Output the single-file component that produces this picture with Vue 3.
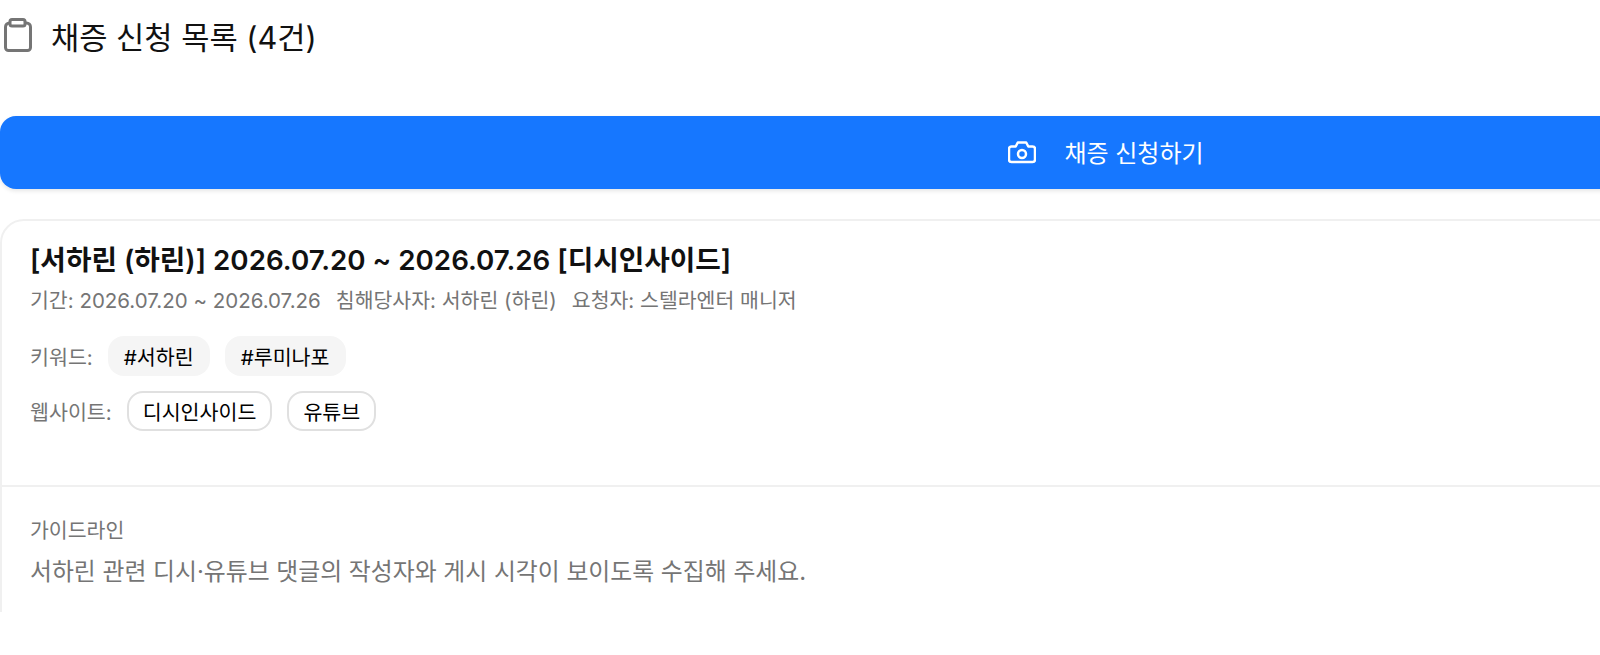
<template>
  <div class="viewport">
    <div class="page">
      <h2 class="list-title">
        <svg class="title-icon" viewBox="0 0 28 34" fill="none" stroke="#757575" stroke-width="3" stroke-linejoin="round">
          <path d="M6 5H5.500A4 4 0 0 0 1.500 9v20.500a3 3 0 0 0 3 3h19a3 3 0 0 0 3-3V9a4 4 0 0 0-4-4H22" />
          <rect x="6" y="1.500" width="15" height="6.500" rx="2" fill="#fff" />
        </svg>
        <span>채증 신청 목록 (4건)</span>
      </h2>

      <button type="button" class="apply-button">
        <svg class="camera-icon" viewBox="0 0 28 24" fill="none" stroke="#fff" stroke-width="2.500" stroke-linejoin="round" stroke-linecap="round">
          <path d="M3.500 6.500h4.200L9.800 2.500h8.400l2.100 4h4.200A2.500 2.500 0 0 1 27 9v10.500a2.500 2.500 0 0 1-2.500 2.500h-21A2.500 2.500 0 0 1 1 19.500V9a2.500 2.500 0 0 1 2.500-2.500z" />
          <circle cx="14" cy="14" r="4" />
        </svg>
        <span>채증 신청하기</span>
      </button>

      <article class="request-card">
        <div class="card-body">
          <h3>{{ request.title }}</h3>
          <p class="meta">
            <span v-for="item in request.meta" :key="item">{{ item }}</span>
          </p>
          <div class="tag-row keyword-row">
            <span class="row-label">키워드:</span>
            <span v-for="tag in request.keywords" :key="tag" class="tag tag-fill">{{ tag }}</span>
          </div>
          <div class="tag-row">
            <span class="row-label">웹사이트:</span>
            <span v-for="site in request.sites" :key="site" class="tag tag-line">{{ site }}</span>
          </div>
        </div>
        <div class="guide">
          <h4>가이드라인</h4>
          <p>{{ request.guide }}</p>
        </div>
      </article>
    </div>
  </div>
</template>

<script setup>
const request = {
  title: '[서하린 (하린)] 2026.07.20 ~ 2026.07.26 [디시인사이드]',
  meta: ['기간: 2026.07.20 ~ 2026.07.26', '침해당사자: 서하린 (하린)', '요청자: 스텔라엔터 매니저'],
  keywords: ['#서하린', '#루미나포'],
  sites: ['디시인사이드', '유튜브'],
  guide: '서하린 관련 디시·유튜브 댓글의 작성자와 게시 시각이 보이도록 수집해 주세요.'
}
</script>

<style scoped>
.viewport {
  width: 1600px;
  height: 655px;
  overflow: hidden;
  background: #ffffff;
}

.page {
  width: 2212px;
  height: 612px;
  overflow: hidden;
  font-family: Inter, "Noto Sans CJK KR", sans-serif;
  color: #111111;
}

.list-title {
  display: flex;
  align-items: center;
  gap: 19px;
  height: 70px;
  margin: 0;
  padding-left: 4px;
  font-size: 30.700px;
  font-weight: 400;
  color: #111111;
}

.title-icon {
  width: 28px;
  height: 34px;
}

.apply-button {
  display: flex;
  align-items: center;
  justify-content: center;
  gap: 28px;
  width: 100%;
  height: 73px;
  margin-top: 46px;
  padding: 0 0 2px;
  border: 0;
  border-radius: 16px;
  background: #1677ff;
  box-shadow: 0 2px 4px rgba(0, 0, 0, 0.1);
  color: #ffffff;
  font-family: inherit;
  font-size: 24px;
}

.camera-icon {
  width: 28px;
  height: 24px;
}

.request-card {
  margin-top: 30px;
  border: 2px solid #f0f0f0;
  border-radius: 24px;
}

.card-body {
  padding: 19px 28px 54px;
  border-bottom: 2px solid #f0f0f0;
}

h3 {
  margin: 0;
  font-size: 27.750px;
  line-height: 40px;
  font-weight: 600;
}

.meta {
  display: flex;
  gap: 15px;
  margin: 6px 0 0;
  font-size: 20.500px;
  line-height: 30px;
  color: #757575;
}

.tag-row {
  display: flex;
  align-items: center;
  gap: 15px;
  margin-top: 15px;
}

.keyword-row {
  margin-top: 20px;
}

.row-label {
  font-size: 20.600px;
  color: #757575;
}

.tag {
  display: flex;
  align-items: center;
  box-sizing: border-box;
  height: 40px;
  padding: 0 16px;
  border-radius: 16px;
  font-size: 20.600px;
  font-weight: 400;
  color: #000000;
}

.tag-fill {
  background: #f5f5f5;
}

.tag-line {
  border: 2px solid #e0e0e0;
  padding: 0 14px;
}

.guide {
  padding: 29px 28px 80px;
}

h4 {
  margin: 0;
  font-size: 20.500px;
  line-height: 30px;
  font-weight: 400;
  color: #757575;
}

.guide p {
  margin: 8px 0 0;
  font-size: 23.850px;
  line-height: 36px;
  color: #757575;
}
</style>
